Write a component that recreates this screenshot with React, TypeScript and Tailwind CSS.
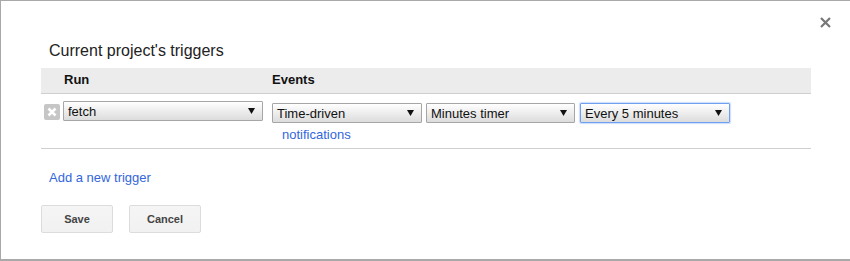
import React from "react";

const Arrow = () => (
  <svg width="7" height="6" viewBox="0 0 7 6" className="shrink-0">
    <polygon points="0,0 7,0 3.5,6" fill="#111" />
  </svg>
);

const FakeSelect = ({ value, width, focused }: { value: string; width: string; focused?: boolean }) => (
  <div
    className={`flex h-[20px] items-center justify-between rounded-[1px] border bg-gradient-to-b from-white to-[#dcdcdc] pl-[4px] pr-[7px] text-[13px] leading-[15px] text-[#111] ${width} ${
      focused ? "border-[#6e9ff0] shadow-[0_0_1px_1px_rgba(110,159,240,0.35)]" : "border-[#a6a6a6]"
    }`}
  >
    <span>{value}</span>
    <Arrow />
  </div>
);

export default function App() {
  return (
    <div className="relative h-[261px] w-[850px] overflow-hidden border-b-2 border-l border-t border-[#a9a9a9] bg-white font-['Liberation_Sans',Arial,sans-serif]">
      {/* Close */}
      <button className="absolute right-[19px] top-[16px] p-0" aria-label="Close">
        <svg width="11" height="11" viewBox="0 0 11 11">
          <path d="M1 1 L10 10 M10 1 L1 10" stroke="#777" strokeWidth="2.2" />
        </svg>
      </button>

      <div className="w-[810px] pl-[40px] pt-[40px]">
        <h2 className="pl-[8px] text-[16px] leading-[20px] text-[#222]">Current project's triggers</h2>

        {/* Header */}
        <div className="mt-[7px] grid h-[26px] grid-cols-[231px_1fr] border-b border-[#cfcfcf] bg-[#ececec] pt-[4px] text-[13px] font-bold leading-[16px] text-[#111]">
          <div className="pl-[23px]">Run</div>
          <div>Events</div>
        </div>

        {/* Trigger row */}
        <div className="grid h-[55px] grid-cols-[231px_1fr] border-b border-[#cfcfcf]">
          <div className="flex items-start gap-[3px] pl-[3px] pt-[7px]">
            <div className="mt-[3px] flex h-[16px] w-[16px] items-center justify-center rounded-[2px] bg-[#c6c6c6]">
              <svg width="10" height="10" viewBox="0 0 10 10">
                <path d="M1.5 1.5 L8.5 8.5 M8.5 1.5 L1.5 8.5" stroke="#fff" strokeWidth="2.6" />
              </svg>
            </div>
            <FakeSelect value="fetch" width="w-[200px]" />
          </div>
          <div className="pt-[9px]">
            <div className="flex">
              <FakeSelect value="Time-driven" width="w-[150px]" />
              <div className="ml-[4px]">
                <FakeSelect value="Minutes timer" width="w-[149px]" />
              </div>
              <div className="ml-[5px]">
                <FakeSelect value="Every 5 minutes" width="w-[150px]" focused />
              </div>
            </div>
            <a href="#" className="mt-[4px] block pl-[10px] text-[13px] leading-[15px] text-[#3366dd]">
              notifications
            </a>
          </div>
        </div>

        <a href="#" className="mt-[21px] block pl-[8px] text-[13px] leading-[15px] text-[#3366dd]">
          Add a new trigger
        </a>

        <div className="mt-[20px] flex gap-[16px]">
          <button className="h-[28px] w-[72px] rounded-[2px] border border-[#dcdcdc] bg-gradient-to-b from-[#f5f5f5] to-[#f1f1f1] text-[11px] font-bold text-[#444]">
            Save
          </button>
          <button className="h-[28px] w-[72px] rounded-[2px] border border-[#dcdcdc] bg-gradient-to-b from-[#f5f5f5] to-[#f1f1f1] text-[11px] font-bold text-[#444]">
            Cancel
          </button>
        </div>
      </div>
    </div>
  );
}
